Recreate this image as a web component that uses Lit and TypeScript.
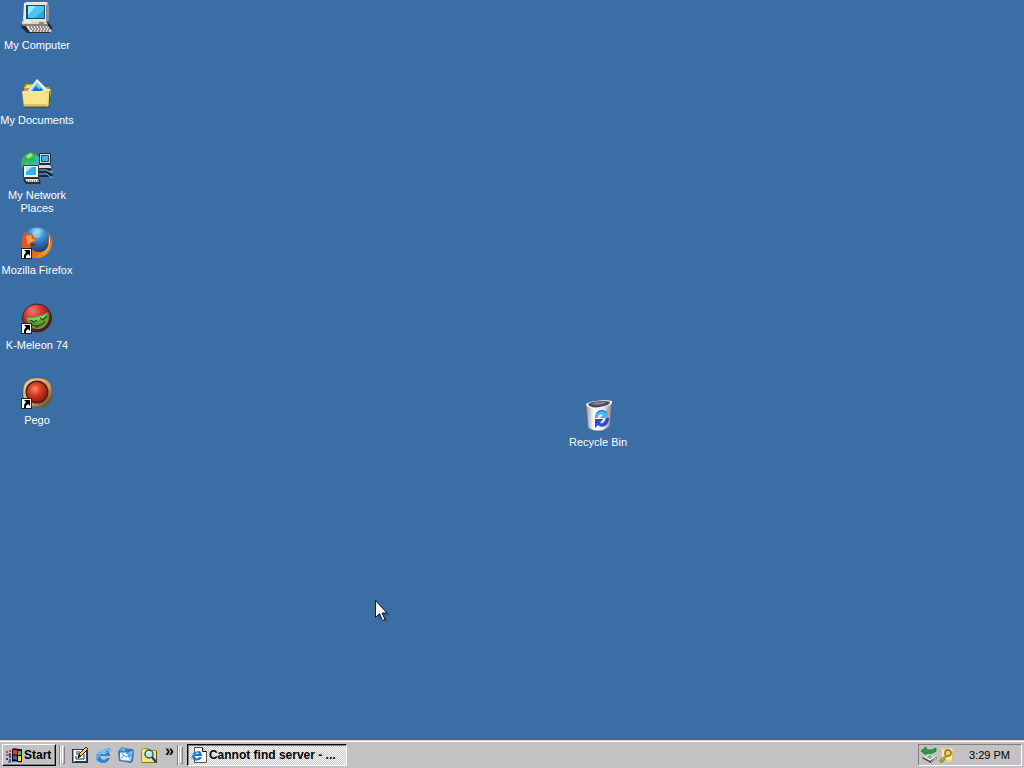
import { LitElement, html, svg, css } from "lit";
import { customElement, property } from "lit/decorators.js";

const shortcutArrow = svg`
  <rect x="0.5" y="21.5" width="10" height="10" fill="#fff" stroke="#1c2430"/>
  <path d="M3 23h6v6l-2-2-2 2v2H3v-3l2-3z" fill="#000"/>`;

const glyphs: Record<string, unknown> = {
  computer: svg`
    <path d="M5 1h22l1 2v16l-3 2H5z" fill="#59616b"/>
    <path d="M3 1l3-1h20l1 2v16l-2 2H4L2 18z" fill="#e9e6dc"/>
    <path d="M25 2l3 1v15l-3 3z" fill="#8b9097"/>
    <path d="M5 3h19v14H5z" fill="#14506e"/>
    <path d="M7 4h16v12H7z" fill="#4cc4f4"/>
    <path d="M7 4h8L7 13z" fill="#9be9ff"/><path d="M23 8v8H13z" fill="#2aa5e6"/>
    <path d="M2 20h25l4 5v3l-3 3H6l-6-6z" fill="#272b31"/>
    <path d="M1 19h24l2 4H1z" fill="#d9d5ca"/><path d="M1 22h26v2H2z" fill="#858077"/>
    <path d="M5 24h22l4 5-2 1H9z" fill="#e8e2da"/>
    <path d="M8 25h19M9 27h20M11 29h18" stroke="#4d3a43" stroke-dasharray="2 1"/>
    <path d="M3 20h7" stroke="#fff"/><path d="M18 21h5" stroke="#39434d"/>`,
  documents: svg`
    <path d="M3 10l2-3h7l2 3h14l1 3v15H3z" fill="#bfa335"/>
    <path d="M4 11l2-3h5l2 3z" fill="#f4df7c"/>
    <path d="M6 15L16 2l14 14-5 5H10z" fill="#eef6fc" stroke="#9dbbd4" stroke-width=".7"/>
    <path d="M9 14l7-9 9 10-4 3h-9z" fill="#79c8ee"/><path d="M11 14l4-5 3 3 2-1 3 4z" fill="#1f6db0"/>
    <path d="M1 14h20l3-2h5l1 2-2 16H3z" fill="#f4db72"/>
    <path d="M2 15h19l3-2h4" fill="none" stroke="#fff7b7"/>
    <path d="M2 16h25l-1 12H3z" fill="#f9e587"/>
    <path d="M3 30h25l1-16" fill="none" stroke="#473f1b"/>
    <path d="M3 28h23" stroke="#c7a740"/>`,
  network: svg`
    <circle cx="11" cy="12" r="11" fill="#146e65"/>
    <circle cx="10" cy="11" r="10" fill="#32b7c5"/>
    <path d="M3 4l6-4 7 2-3 4 2 3-5 2-3-2-3 3-4 2zM3 15l5-2 4 3-1 5H6z" fill="#35b743"/>
    <path d="M5 4l5-3 2 3-5 3z" fill="#99e586"/>
    <path d="M17 16h13v2l-2 1 4 4v2H17zM18 12h11l3 4H18z" fill="#202835"/>
    <path d="M18.500 1.500h11v10h-11z" fill="#d9d6cb" stroke="#222a32"/>
    <path d="M20.500 3.500h7v6h-7z" fill="#3ab6ef" stroke="#174e79"/>
    <path d="M18 13h11l2 3H18z" fill="#dfd7d1"/>
    <path d="M17 18h8l4 2h3M18 22h8l3 3h3" fill="none" stroke="#69c6f2"/>
    <path d="M2.500 13.500h15v12h-15z" fill="#f4f2eb" stroke="#303d47"/>
    <path d="M5 15h10v8H5z" fill="#2bb4ed"/>
    <path d="M5 15h6l-6 5z" fill="#a7edff"/>
    <path d="M3 26h15l2 5-2 1H5l-3-4z" fill="#302b32"/>
    <path d="M4 27h13l1 3H6z" fill="#ebe0d6"/><path d="M6 29h11" stroke="#554048" stroke-dasharray="1 1"/>`,
  firefox: svg`
    <defs>
      <radialGradient id="sea" cx=".5" cy=".15" r=".75"><stop stop-color="#b0e6f8"/><stop offset=".35" stop-color="#3f93cd"/><stop offset="1" stop-color="#0e2f74"/></radialGradient>
      <linearGradient id="fur" x1="0" x2="1" y1="0" y2="1"><stop stop-color="#e0501c"/><stop offset=".65" stop-color="#e66b14"/><stop offset="1" stop-color="#f8bd25"/></linearGradient>
    </defs>
    <circle cx="16" cy="15" r="14.500" fill="url(#sea)"/>
    <path d="M11 6l5-3 5 1-4 3 2 3-5 1z" fill="#8fd5ec" opacity=".6"/>
    <path d="M26 4c4 4 6 9 5 14-2 8-8 13-15 13C6 31 1 24 1 16c0-5 1-8 3-12l3 4 4-2 1 4 4 2-3 3-4 1c0 5 3 9 9 9 7 0 11-6 9-13l1 1c0-3 0-6-2-9z" fill="url(#fur)"/>
    <path d="M28 8c4 12-3 19-11 20 7-2 11-6 11-12z" fill="#ffd236"/>
    <path d="M5 9l5-1 1 4 4 1-5 2-3 3z" fill="#ff9e4b"/>
    <path d="M10 16l6 1-3 2-3 1z" fill="#8d2c19"/>
    ${shortcutArrow}`,
  kmeleon: svg`
    <defs><radialGradient id="shell" cx=".35" cy=".25" r=".8"><stop stop-color="#f4786c"/><stop offset=".45" stop-color="#c72b2f"/><stop offset="1" stop-color="#421715"/></radialGradient></defs>
    <ellipse cx="16" cy="16" rx="14.500" ry="14" fill="url(#shell)" stroke="#402320"/>
    <path d="M5 15c5 1 14-1 22-5 3 6-1 16-9 17C11 28 6 22 5 15z" fill="#5f9f38"/>
    <path d="M6 16c6 1 13-1 20-4l-3 4-8 3-7-1z" fill="#94cc58"/>
    <path d="M9 18l4 2 3-2M19 16l3 2 4-4M10 22c4 3 9 2 14-2M14 25h4" fill="none" stroke="#294f22" stroke-width="1.2"/>
    ${shortcutArrow}`,
  pego: svg`
    <defs><radialGradient id="ball" cx=".4" cy=".35" r=".7"><stop stop-color="#ff8a66"/><stop offset=".4" stop-color="#d84226"/><stop offset="1" stop-color="#8b160e"/></radialGradient>
    <linearGradient id="rim" x2="1" y2="1"><stop stop-color="#f3db9c"/><stop offset=".6" stop-color="#c8a060"/><stop offset="1" stop-color="#3e2b19"/></linearGradient></defs>
    <rect x="2" y="1" width="29" height="29" rx="12" fill="url(#rim)" stroke="#6a5232" stroke-width=".6"/>
    <circle cx="16" cy="15" r="11.500" fill="#5a1c10"/><circle cx="16" cy="15" r="10" fill="url(#ball)"/>
    ${shortcutArrow}`,
  bin: svg`
    <defs><linearGradient id="tin"><stop stop-color="#9a96a8"/><stop offset=".3" stop-color="#fff"/><stop offset=".7" stop-color="#e3e2ea"/><stop offset="1" stop-color="#817c91"/></linearGradient></defs>
    <path d="M4 5l26-2-2 24-6 4c-5 2-11 1-16-2z" fill="url(#tin)" stroke="#5f5a70" stroke-width=".6"/>
    <path d="M4 5c3-3 20-5 26-3 1 4-5 6-12 7-6 1-14 0-14-4z" fill="#f4f1f5"/>
    <path d="M6 5c4-3 17-4 22-2 0 3-5 4-10 5-6 1-11 0-12-3z" fill="#4d4a59"/>
    <path d="M9 5c4-2 11-3 15-2-1 2-8 4-15 2z" fill="#86828f"/>
    <path d="M13 19c-1-7 7-10 11-6l2-3v9h-8l3-3c-3-2-5 0-5 3z" fill="#4ab5ee"/>
    <path d="M27 19c0 8-7 11-11 7l-3 3v-9h8l-3 4c3 1 5-1 6-5z" fill="#294dcb"/>
    <path d="M15 14c2-3 6-3 9-1" fill="none" stroke="#2450cb"/>`,
  flag: svg`
    <path d="M6 2c4-2 6 1 10 0v13c-4 1-6-2-10 0z" fill="#000"/>
    <path d="M7 3c2-1 3 0 4 0v5c-1 0-3-1-4 0z" fill="#e53228"/><path d="M12 4h3v4h-3z" fill="#42bd4d"/>
    <path d="M7 9c2-1 3 0 4 0v4c-1 0-3-1-4 0z" fill="#3461dc"/><path d="M12 9h3v5h-3z" fill="#f3d733"/>
    <path d="M3 4h2M3 7h2M0 5h2" stroke="#d5363a" stroke-width="2"/><path d="M3 10h2M3 13h2M0 12h2" stroke="#2445b6" stroke-width="2"/><path d="M0 8h5M2 15h3" stroke="#222"/>`,
  desktop: svg`
    <path d="M0 2h16v14H0z" fill="#20384d"/><path d="M1 3h2v12H1z" fill="#51bdc7"/>
    <path d="M2 3h12v11H2z" fill="#fffef2"/><path d="M4 7h3M4 5h4M4 12h8v-5M4 12V9" fill="none" stroke="#242c32"/>
    <path d="M6 11l1-4 7-7 2 2-7 7z" fill="#f1cd51" stroke="#292317"/><path d="M6 11l1-4 2 2z" fill="#141414"/>`,
  explorer: svg`
    <path d="M15 9H5c0 4 5 5 7 2h3c-2 5-7 6-11 4-4-3-3-9 1-11 5-3 10 0 10 5zM5 7h6c-1-3-5-3-6 0z" fill="#2985d6" fill-rule="evenodd"/>
    <path d="M1 15C-2 10 8 1 14 1c3 0 2 3 0 5 1-3 0-3-3-2C6 6 2 11 1 15z" fill="#62b7ef"/>
    <path d="M3 7c2-4 7-4 9-1" fill="none" stroke="#9cdcff"/>`,
  mail: svg`
    <path d="M1 3l3-2 11 1 1 3-1 9-2 2-12-2-1-9z" fill="#3977bd"/>
    <path d="M2 5l12 1-1 8-11-1z" fill="#e8f7ff"/><path d="M2 5l6 5 6-4M2 13l4-5M13 14l-3-6" fill="none" stroke="#69a4d3"/>
    <path d="M4 0l4 3-3 3V4H1l2-2zM15 3v5l-4 2V7l-3-1z" fill="#70bff0" stroke="#286db9" stroke-width=".7"/>`,
  search: svg`
    <path d="M.5 3.500l2-2h5l2 2h6v12H.5z" fill="#f8e676" stroke="#a38c32"/>
    <path d="M1 5h13" fill="none" stroke="#fff6b0"/><path d="M15.500 4v12H1" fill="none" stroke="#5c4f1c"/>
    <circle cx="8" cy="7" r="4" fill="#b8e8f4" stroke="#29546a" stroke-width="1.400"/><path d="M11 10l4 5" stroke="#1a3c9c" stroke-width="2.400"/><path d="M6 6l2-1" stroke="#fff"/>`,
  page: svg`
    <path d="M3.500.5h8l4 4v11h-12z" fill="#fff" stroke="#555"/><path d="M11.500.5v4h4" fill="#ddd" stroke="#111"/>
    <path d="M11 9H4c0 3 3 3 4 1h3c-2 4-5 4-8 3-3-2-2-7 1-8 4-2 7 0 7 4zM4 7h4C7 5 5 5 4 7z" fill="#226fc4" fill-rule="evenodd"/><path d="M0 13C0 8 7 3 11 4 6 5 3 8 0 13z" fill="#3c98df"/>`,
  eject: svg`
    <path d="M1 11l7-4 8 4-6 5z" fill="#30332e"/><path d="M2 10l6-3 7 3-6 4z" fill="#e9ebe8"/><path d="M5 10l4-2 3 2-3 2z" fill="#989d99"/><path d="M10 15l5-4" stroke="#eee"/>
    <path d="M0 4l5-4v2c4 2 6 1 10-1v3C11 7 8 7 5 6v2z" fill="#20a33a" stroke="#176127" stroke-width=".7"/>`,
  key: svg`
    <path d="M3 1h9l2 2v12H3z" fill="#f4e9b1"/><path d="M4 2h7M13.500 4v10H4" fill="none" stroke="#d6bd70"/>
    <circle cx="9" cy="6" r="3" fill="#e9da5c" stroke="#887922" stroke-width="1.500"/><path d="M7 8l-6 5v2h3v-2h2v-2l3-2" fill="#c8b43c" stroke="#776b20" stroke-width=".8"/>`,
};

function icon(name: string, size = 16) {
  return html`<svg class="glyph" width=${size} height=${size} viewBox="0 0 ${size} ${size}" aria-hidden="true">${glyphs[name]}</svg>`;
}

@customElement("desktop-icon")
class DesktopIcon extends LitElement {
  @property() name = "";
  @property() label = "";
  static styles = css`
    :host { display: block; width: 74px; height: 75px; }
    .item { width: 100%; padding: 2px 0 0; border: 0; background: none; color: #fff; font: 11px/13px "Liberation Sans", Arial, sans-serif; display: flex; flex-direction: column; align-items: center; gap: 5px; }
    .glyph { display: block; overflow: visible; }
    .label { display: block; }
  `;
  render() {
    return html`<button class="item">${icon(this.name, 32)}<span class="label">${this.label}</span></button>`;
  }
}

@customElement("task-bar")
class TaskBar extends LitElement {
  static styles = css`
    :host { display: block; font: 11px/13px "Liberation Sans", Arial, sans-serif; color: #000; }
    .bar { height: 28px; box-sizing: border-box; padding: 2px; display: flex; align-items: stretch; background: #c3c1c3; border-top: 1px solid #d6d3ce; box-shadow: inset 0 1px #fff; }
    button { font: inherit; color: inherit; padding: 0; border: 0; background: none; display: flex; align-items: center; }
    .glyph { display: block; flex: none; }
    .start { width: 54px; margin-top: 1px; box-sizing: border-box; padding-left: 3px; gap: 2px; font: bold 12px/14px "Liberation Sans", Arial, sans-serif; background: #c3c1c3; border: 1px solid; border-color: #fff #000 #000 #fff; box-shadow: inset -1px -1px #808080; }
    .grip { margin: 2px 0 1px; border-left: 1px solid #808080; border-right: 1px solid #fff; }
    .handle { width: 3px; margin: 3px 0 2px 1px; border: 1px solid; border-color: #fff #808080 #808080 #fff; box-sizing: border-box; background: #c3c1c3; }
    .start + .grip { margin-left: 3px; }
    .quick { display: flex; align-items: center; gap: 7px; margin-left: 7px; }
    .more { align-self: flex-start; margin: 2px 3px 0 1px; font: bold 16px/12px "Liberation Sans", Arial, sans-serif; }
    .task { flex: 0 1 160px; min-width: 0; box-sizing: border-box; margin: 1px 0 0 4px; padding-left: 3px; gap: 2px; font-weight: bold; border: 1px solid; border-color: #000 #fff #fff #000; box-shadow: inset 1px 1px #808080; background: repeating-conic-gradient(#fff 0 25%, #cbc8cb 0 50%) 0 0 / 2px 2px; }
    .title { white-space: nowrap; overflow: hidden; text-overflow: ellipsis; font-size: 12px; }
    .tray { margin: 1px 0 0 auto; width: 104px; box-sizing: border-box; display: flex; align-items: center; padding: 0 11px 0 2px; gap: 2px; border: 1px solid; border-color: #808080 #fff #fff #808080; }
    .clock { margin-left: auto; white-space: nowrap; }
  `;
  render() {
    return html`<footer class="bar">
      <button class="start">${icon("flag")}<span>Start</span></button>
      <span class="grip"></span><span class="handle"></span>
      <nav class="quick">
        ${["desktop", "explorer", "mail", "search"].map((n) => html`<button aria-label=${n}>${icon(n)}</button>`)}
        <button class="more">»</button>
      </nav>
      <span class="grip"></span><span class="handle"></span>
      <button class="task">${icon("page")}<span class="title">Cannot find server - ...</span></button>
      <div class="tray">
        <button aria-label="Hardware">${icon("eject")}</button>
        <button aria-label="Security">${icon("key")}</button>
        <time class="clock">3:29 PM</time>
      </div>
    </footer>`;
  }
}

@customElement("app-root")
class AppRoot extends LitElement {
  static styles = css`
    :host { display: flex; flex-direction: column; height: 100vh; background: #3a6ea5; overflow: hidden; }
    .desktop { flex: 1; min-height: 0; position: relative; }
    .shortcuts { display: flex; flex-flow: column wrap; align-content: flex-start; height: 100%; }
    .bin { position: absolute; left: 561px; top: 397px; }
    .pointer { position: absolute; left: 375px; top: 600px; pointer-events: none; }
  `;
  render() {
    const items = [
      ["computer", "My Computer"],
      ["documents", "My Documents"],
      ["network", "My Network Places"],
      ["firefox", "Mozilla Firefox"],
      ["kmeleon", "K-Meleon 74"],
      ["pego", "Pego"],
    ];
    return html`
      <main class="desktop">
        <div class="shortcuts">
          ${items.map(([name, label]) => html`<desktop-icon name=${name} label=${label}></desktop-icon>`)}
        </div>
        <desktop-icon class="bin" name="bin" label="Recycle Bin"></desktop-icon>
        <svg class="pointer" width="16" height="24" viewBox="0 0 16 24" aria-hidden="true">
          <path d="M3 3v17l4-4 3 6 3-1-3-6h5z" fill="#173a63" opacity=".45"/>
          <path d="M.5.5v17l4-4 3 7 2.500-1-3-6.500h5z" fill="#fff" stroke="#101820"/>
        </svg>
      </main>
      <task-bar></task-bar>`;
  }
}
